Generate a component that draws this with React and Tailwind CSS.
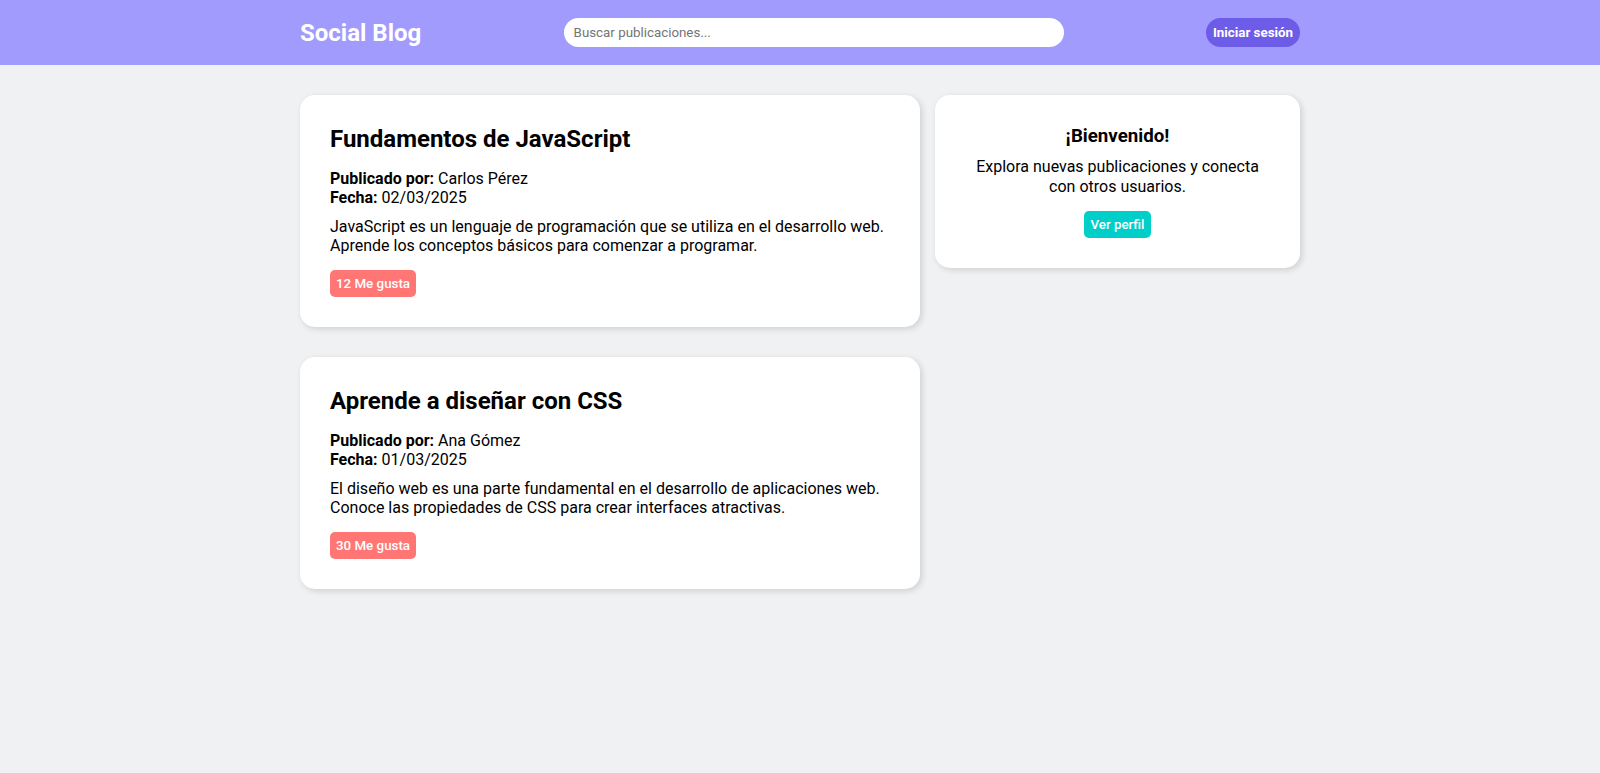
export default function App() {
  const posts = [
    {
      id: 1,
      title: "Fundamentos de JavaScript",
      author: "Carlos Pérez",
      date: "02/03/2025",
      text: "JavaScript es un lenguaje de programación que se utiliza en el desarrollo web. Aprende los conceptos básicos para comenzar a programar.",
      likes: 12,
    },
    {
      id: 2,
      title: "Aprende a diseñar con CSS",
      author: "Ana Gómez",
      date: "01/03/2025",
      text: "El diseño web es una parte fundamental en el desarrollo de aplicaciones web. Conoce las propiedades de CSS para crear interfaces atractivas.",
      likes: 30,
    },
  ];

  return (
    <div className="min-h-screen bg-[#f0f1f3] text-black font-['Roboto',sans-serif]">
      {/* HEADER */}
      <header className="bg-[#a29bfe] h-[65px]">
        <div className="w-[1000px] mx-auto h-full flex items-center justify-between">
          <h1 className="text-2xl font-bold text-white">Social Blog</h1>
          <input
            type="text"
            placeholder="Buscar publicaciones..."
            className="w-[500px] h-[29px] rounded-full bg-white px-[10px] text-[13.33px] outline-none placeholder:text-[#757575]"
          />
          <button className="h-[29px] px-[7px] rounded-full bg-[#6c5ce7] text-white text-[13.33px] font-bold">
            Iniciar sesión
          </button>
        </div>
      </header>

      {/* MAIN */}
      <main className="w-[1000px] mx-auto pt-[30px] flex items-start gap-[15px]">
        <div className="w-[620px] flex flex-col gap-[30px]">
          {posts.map((p) => (
            <article
              key={p.id}
              className="bg-white rounded-[15px] p-[30px] shadow-[2px_2px_6px_rgba(0,0,0,0.14)]"
            >
              <h2 className="text-2xl font-bold leading-7 mb-[16px]">{p.title}</h2>
              <p className="leading-[19px]">
                <strong>Publicado por:</strong> {p.author}
              </p>
              <p className="leading-[19px]">
                <strong>Fecha:</strong> {p.date}
              </p>
              <p className="leading-[19px] mt-[10px]">{p.text}</p>
              <button className="mt-[15px] h-[27px] px-[6px] rounded-[5px] bg-[#ff7675] text-white text-[13.33px] font-medium">
                {p.likes} Me gusta
              </button>
            </article>
          ))}
        </div>

        {/* SIDEBAR */}
        <aside className="w-[365px] bg-white rounded-[15px] p-[30px] text-center shadow-[2px_2px_6px_rgba(0,0,0,0.14)]">
          <h3 className="text-[18.72px] font-bold leading-[22px]">¡Bienvenido!</h3>
          <p className="mt-[10px] leading-[19.5px]">
            Explora nuevas publicaciones y conecta con otros usuarios.
          </p>
          <button className="mt-[15px] h-[27px] px-[6px] rounded-[5px] bg-[#00cec9] text-white text-[13.33px] font-medium">
            Ver perfil
          </button>
        </aside>
      </main>
    </div>
  );
}
